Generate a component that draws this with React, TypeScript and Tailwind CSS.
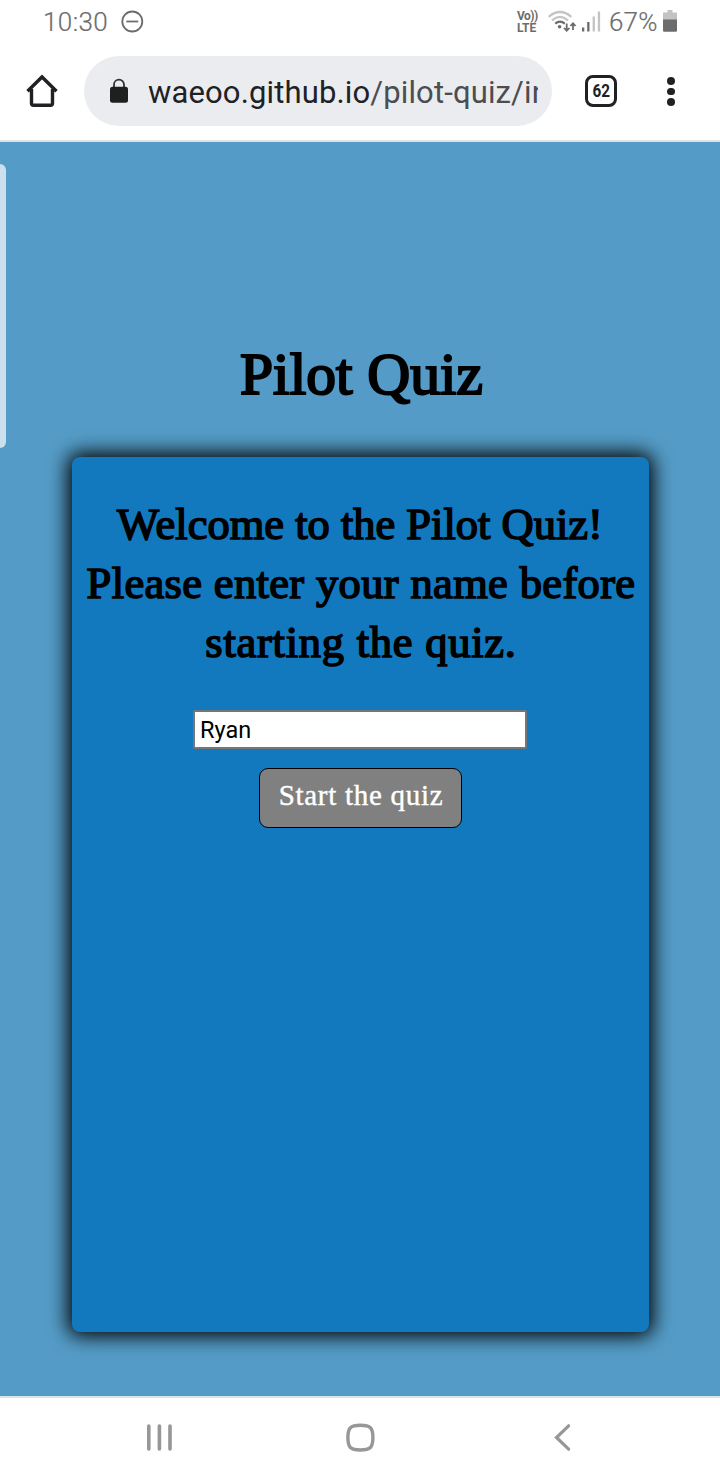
function StatusBar() {
  return (
    <div className="flex h-[44px] shrink-0 items-center pl-[43px] pr-[42px] font-[Roboto,sans-serif] text-[26px] leading-[44px] text-[#6c6c6c]">
      <span className="w-[66px] whitespace-nowrap font-light tracking-[0.4px] [-webkit-text-stroke:0.2px_#6c6c6c]">10:30</span>
      <svg className="ml-[11px]" width="24" height="24" viewBox="0 0 24 24" fill="none" stroke="#6c6c6c" strokeWidth="1.8">
        <circle cx="12.3" cy="11.5" r="10" />
        <path d="M6.3 11.5h12" />
      </svg>
      <div className="ml-auto flex items-center">
        <div className="flex w-[24px] flex-col text-[12px] font-bold leading-[12px]">
          <span className="whitespace-nowrap tracking-[-0.5px]">Vo))</span>
          <span className="whitespace-nowrap tracking-[-0.1px]">LTE</span>
        </div>
        <svg className="ml-[6px]" width="30" height="26" viewBox="547 8 30 26" fill="none">
          <path d="M548.7 15.8Q560 6.2 571.3 15.8" stroke="#c3c3c3" strokeWidth="2.2" />
          <path d="M552 19.3Q560 12.6 568 19.3" stroke="#c3c3c3" strokeWidth="2.2" />
          <path d="M555.2 22.6Q560 18.6 564.8 22.6" stroke="#6c6c6c" strokeWidth="2.2" />
          <circle cx="559.6" cy="25.7" r="1.8" fill="#6c6c6c" />
          <path d="M566.7 22.5v7M564 27l2.7 2.8 2.7-2.8M573 29v-6M570.4 25l2.6-2.7 2.6 2.7" stroke="#6c6c6c" strokeWidth="1.8" />
        </svg>
        <svg className="ml-[4px]" width="22" height="22" viewBox="581 10.5 22 22">
          <path d="M582 27h2.3v4H582zM587.2 21.5h2.3V31h-2.3z" fill="#6c6c6c" />
          <path d="M592.6 16h2.3v15h-2.3zM597.8 11h2.3v20h-2.3z" fill="#c3c3c3" />
        </svg>
        <span className="ml-[6px] w-[49px] whitespace-nowrap font-light tracking-[0.2px] [-webkit-text-stroke:0.2px_#6c6c6c]">67%</span>
        <svg className="ml-[4px]" width="16" height="24" viewBox="662 9.5 16 24">
          <path d="M667.5 9.500h5v2.500h4.500v7.500h-14V12h4.500z" fill="#c3c3c3" />
          <path d="M663 19h14v11q0 1.300-1.300 1.300h-11.400q-1.300 0-1.300-1.300z" fill="#6c6c6c" />
        </svg>
      </div>
    </div>
  );
}

function BrowserBar() {
  return (
    <div className="flex h-[98px] shrink-0 items-start border-b-2 border-[#dce3e5] pt-[12px]">
      <svg className="ml-[24px] mt-[17px]" width="36" height="36" viewBox="24 73 36 36" fill="none" stroke="#202124" strokeWidth="3.4">
        <path d="M27.5 91.3L42 77l14.5 14.3" />
        <path d="M31.5 89v14.2q0 2 2 2h17q2 0 2-2V89" />
      </svg>
      <div className="ml-[24px] flex h-[70px] w-[468px] items-center rounded-full bg-[#ebecf0] pl-[25px]">
        <svg width="20" height="26" viewBox="109 78 20 26">
          <path d="M114 88v-3.400a5 5 0 0 1 10 0V88" fill="none" stroke="#303134" strokeWidth="1.8" />
          <rect x="110" y="86.7" width="18" height="16" rx="2.5" fill="#1f1f1f" />
        </svg>
        <div className="ml-[19px] mt-[4px] w-[390px] overflow-hidden whitespace-nowrap font-[Roboto,sans-serif] text-[31px] leading-[44px] tracking-[0.14px] text-[#202124]">
          waeoo.github.io<span className="text-[#4c4d50]">/pilot-quiz/index</span>
        </div>
      </div>
      <div className="ml-[33px] mt-[19px] flex size-[32px] items-center justify-center rounded-[8px] border-[3.5px] border-[#202124] font-[Roboto,sans-serif] text-[18px] font-bold leading-[18px] text-[#202124]">
        <span className="inline-block scale-x-[0.85]">62</span>
      </div>
      <div className="ml-[50px] mt-[21px] flex flex-col gap-[3px]">
        <i className="size-[7.5px] rounded-full bg-[#202124]" />
        <i className="size-[7.5px] rounded-full bg-[#202124]" />
        <i className="size-[7.5px] rounded-full bg-[#202124]" />
      </div>
    </div>
  );
}

function QuizPage() {
  return (
    <main className="relative flex h-[1254px] shrink-0 flex-col items-center overflow-hidden bg-[#549cc7] font-['Liberation_Serif',serif] text-black">
      <div className="absolute left-0 top-[22px] h-[284px] w-[6px] rounded-r-[7px] bg-[#cbe0ec]" />
      <h1 className="mt-[197px] h-[70px] whitespace-nowrap pl-[3px] text-[59.5px] font-normal leading-[70px] [-webkit-text-stroke:2.2px_black]">
        Pilot Quiz
      </h1>
      <section className="mt-[48px] flex h-[875px] w-[577px] flex-col items-center rounded-[8px] bg-[#1379be] shadow-[0_0_20px_4px_#000]">
        <h2 className="mt-[38px] text-center text-[44.5px] font-normal leading-[59px] [-webkit-text-stroke:1.6px_black]">
          <span className="block whitespace-nowrap">Welcome to the Pilot Quiz!</span>
          <span className="block whitespace-nowrap pl-[2px] tracking-[0.35px]">Please enter your name before</span>
          <span className="block whitespace-nowrap pl-[2px] tracking-[0.75px]">starting the quiz.</span>
        </h2>
        <input
          className="mt-[38px] h-[39px] w-[334px] rounded-[2px] border-2 border-[#767676] bg-white pl-[5px] font-[Roboto,sans-serif] text-[23.5px] text-black outline-none"
          defaultValue="Ryan"
        />
        <button className="mt-[19px] h-[60px] w-[203px] whitespace-nowrap rounded-[9px] border border-black bg-[#808080] pb-[4px] pl-[2px] text-[29px] tracking-[0.72px] text-white [-webkit-text-stroke:0.4px_white]">
          Start the quiz
        </button>
      </section>
    </main>
  );
}

function NavigationBar() {
  return (
    <nav className="flex h-[84px] shrink-0 items-start border-t-2 border-[#dce3e5] pt-[24px]">
      <svg className="ml-[144px]" width="32" height="32" viewBox="144 1422 32 32" stroke="#979797" strokeWidth="3.6" strokeLinecap="round">
        <path d="M148.800 1426v23M159.400 1426v23M170 1426v23" />
      </svg>
      <svg className="ml-[168px]" width="32" height="32" viewBox="344 1422 32 32" fill="none" stroke="#979797" strokeWidth="3.4">
        <path d="M360.400 1425.200c10 0 12.500 2.500 12.500 12.400s-2.500 12.400-12.500 12.400-12.500-2.500-12.500-12.400 2.500-12.400 12.500-12.400z" />
      </svg>
      <svg className="ml-[172px]" width="28" height="32" viewBox="548 1422 28 32" fill="none" stroke="#979797" strokeWidth="3.2" strokeLinecap="round">
        <path d="M568.600 1425.800L556.500 1437.500l12.100 11.700" />
      </svg>
    </nav>
  );
}

export default function App() {
  return (
    <div className="flex h-[1480px] w-[720px] flex-col overflow-hidden bg-white">
      <StatusBar />
      <BrowserBar />
      <QuizPage />
      <NavigationBar />
    </div>
  );
}
